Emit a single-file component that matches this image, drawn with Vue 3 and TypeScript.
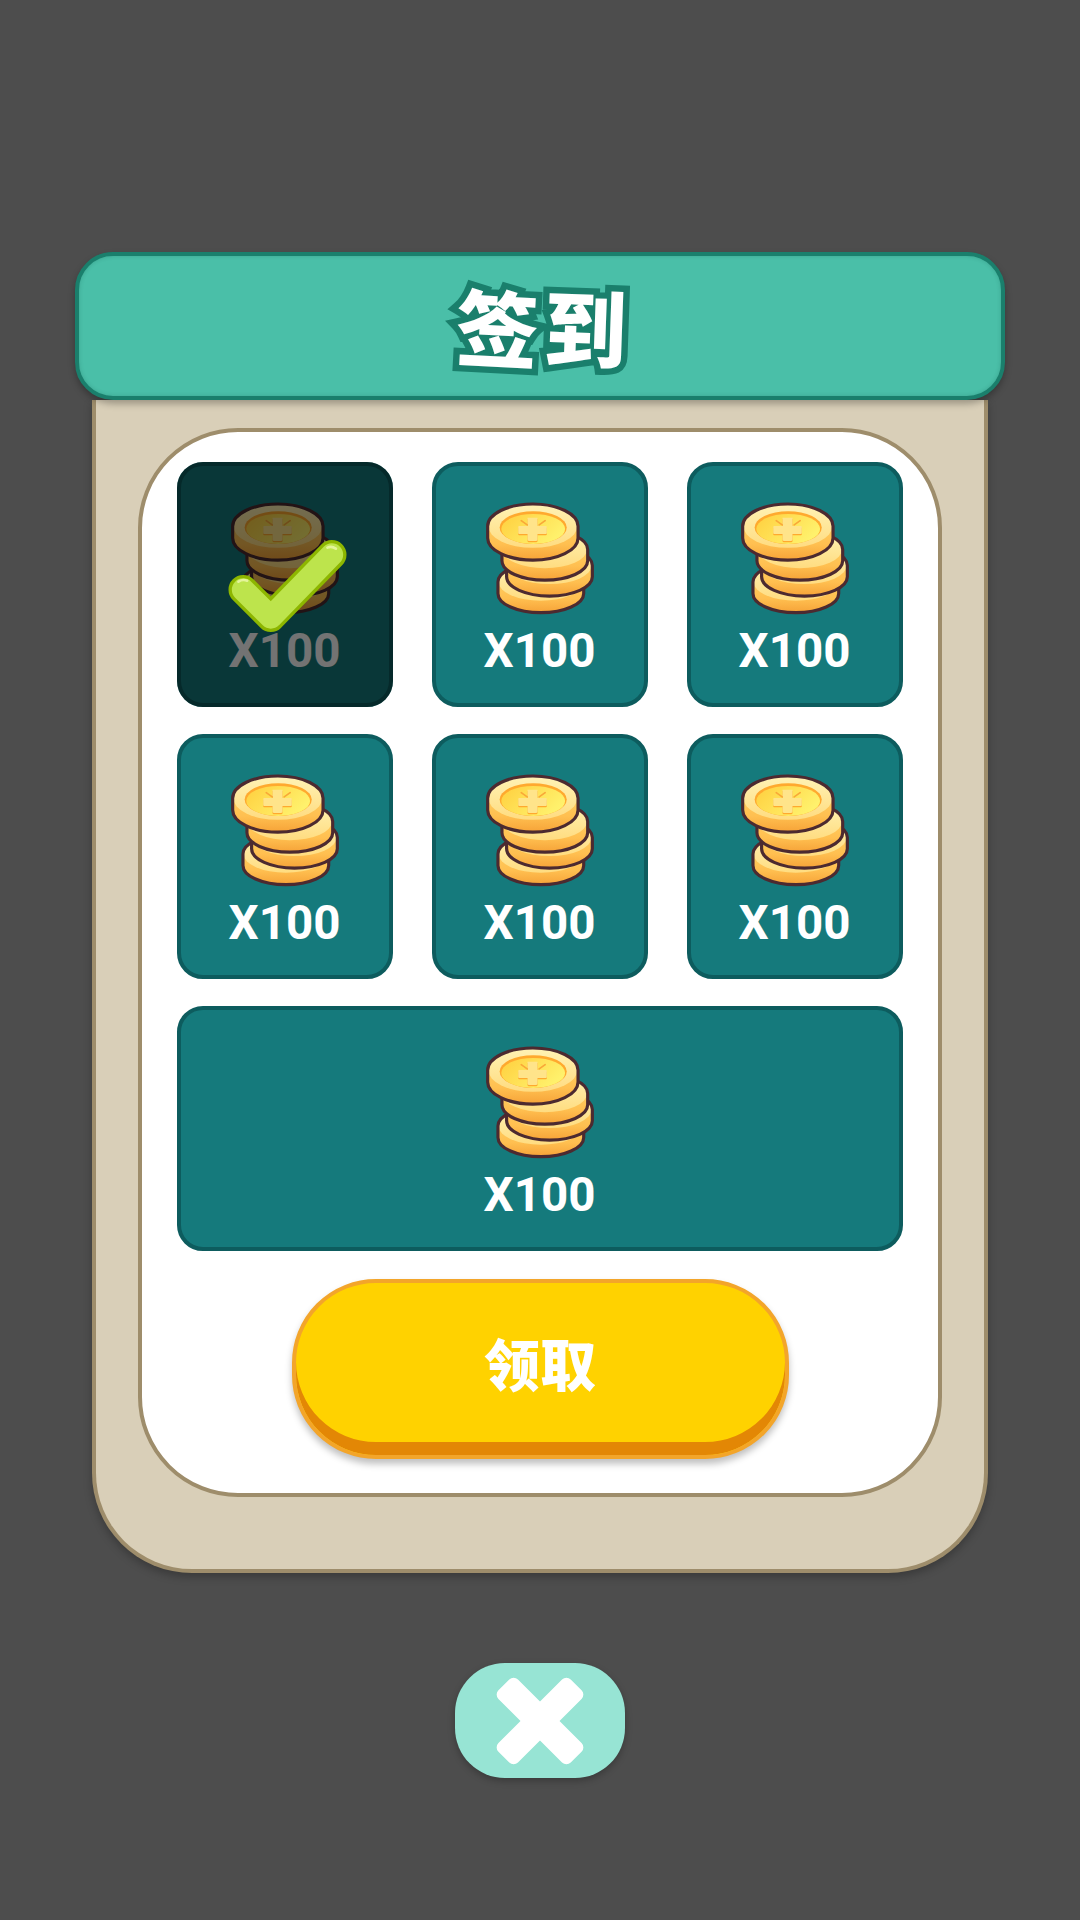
<script setup lang="ts">
interface Reward { id: number; wide?: boolean; done?: boolean }
const rewards: Reward[] = [
  { id: 1, done: true },
  { id: 2 },
  { id: 3 },
  { id: 4 },
  { id: 5 },
  { id: 6 },
  { id: 7, wide: true },
]
const lowerCoins = [
  { cx: 360, cy: 399 },
  { cx: 386, cy: 349 },
  { cx: 372, cy: 301 },
]
function side(cx: number, cy: number, rx: number, ry: number, h: number): string {
  return `M${cx - rx} ${cy}A${rx} ${ry} 0 0 1 ${cx + rx} ${cy}V${cy + h}A${rx} ${ry} 0 0 1 ${cx - rx} ${cy + h}Z`
}
</script>

<template>
  <div class="screen">
    <svg class="sprite" aria-hidden="true">
      <defs>
        <linearGradient id="coinSide" x1="0" y1="0" x2="0" y2="1">
          <stop offset="0.4" stop-color="#ffcc5e" />
          <stop offset="0.72" stop-color="#ffbf50" />
          <stop offset="1" stop-color="#f6a338" />
        </linearGradient>
        <linearGradient id="coinTop" x1="0" y1="0" x2="0" y2="1">
          <stop offset="0" stop-color="#fff2b4" />
          <stop offset="1" stop-color="#ffdc80" />
        </linearGradient>
        <linearGradient id="coinFace" x1="0" y1="0" x2="1" y2="0.5">
          <stop offset="0" stop-color="#ffcf3e" />
          <stop offset="1" stop-color="#fff16c" />
        </linearGradient>
        <symbol id="coins" viewBox="195 158 328 340">
          <g v-for="c in lowerCoins" :key="c.cx">
            <path :d="side(c.cx, c.cy, 129, 58, 34)" fill="url(#coinSide)" />
            <ellipse :cx="c.cx" :cy="c.cy" rx="127" ry="56" fill="url(#coinTop)" />
            <path :d="side(c.cx, c.cy, 129, 58, 34)" fill="none" stroke="#4c2a30" stroke-width="9.5" stroke-linejoin="round" />
          </g>
          <path :d="side(336, 231, 136, 67, 35)" fill="url(#coinSide)" />
          <ellipse cx="336" cy="231" rx="134" ry="65" fill="url(#coinTop)" />
          <path :d="side(336, 231, 136, 67, 35)" fill="none" stroke="#4c2a30" stroke-width="9.5" stroke-linejoin="round" />
          <ellipse cx="337" cy="235" rx="101" ry="49" fill="#ffa92e" />
          <ellipse cx="337" cy="239" rx="96" ry="45" fill="url(#coinFace)" />
          <path
            d="M320 207h30v25h25q3 0 3 3v18q0 3-3 3h-25v17q0 4-4 4h-22q-4 0-4-4v-17h-25q-3 0-3-3v-18q0-3 3-3h25Z"
            fill="#ffa92e"
            transform="translate(0 2)"
          />
          <path
            d="M320 205h30v25h25q3 0 3 3v18q0 3-3 3h-25v17q0 4-4 4h-22q-4 0-4-4v-17h-25q-3 0-3-3v-18q0-3 3-3h25Z"
            fill="#ffe48a"
          />
          <path d="M301 214l18 13M373 214l-18 13" stroke="#f9a838" stroke-width="5" fill="none" stroke-linecap="round" />
        </symbol>
      </defs>
    </svg>

    <div class="dialog">
      <header class="title-bar">
        <h1 class="title"><span class="title-a">签</span><span class="title-b">到</span></h1>
      </header>

      <section class="panel">
        <div class="sheet">
          <div class="grid">
            <div v-for="r in rewards" :key="r.id" class="card" :class="{ wide: r.wide }">
              <svg class="stack"><use href="#coins" /></svg>
              <span class="amount">X100</span>
              <div v-if="r.done" class="veil">
                <svg class="check" viewBox="160 220 440 360">
                  <polyline points="250,417 333,500 516,312" fill="none" stroke="#8db600" stroke-width="88" stroke-linecap="round" stroke-linejoin="round" />
                  <polyline points="250,417 333,500 516,312" fill="none" stroke="#bde44c" stroke-width="68" stroke-linecap="round" stroke-linejoin="round" />
                  <path d="M236 393q12-8 26-3M503 291q12-6 25 3" fill="none" stroke="#e4f49a" stroke-width="8" stroke-linecap="round" />
                </svg>
              </div>
            </div>
          </div>
          <button class="claim" type="button">领取</button>
        </div>
      </section>

      <button class="close" type="button" aria-label="关闭">
        <svg class="close-icon" viewBox="0 0 90 90">
          <rect x="-5" y="31.5" width="100" height="27" rx="6" transform="rotate(45 45 45)" fill="#fff" />
          <rect x="-5" y="31.5" width="100" height="27" rx="6" transform="rotate(-45 45 45)" fill="#fff" />
        </svg>
      </button>
    </div>
  </div>
</template>

<style scoped>
.screen {
  width: 1080px;
  height: 1920px;
  background: #4d4d4d;
  display: flex;
  flex-direction: column;
  align-items: center;
  padding-top: 252px;
  box-sizing: border-box;
  font-family: "Roboto", "Noto Sans CJK SC", sans-serif;
  overflow: hidden;
}
.sprite {
  position: absolute;
  width: 0;
  height: 0;
}
.dialog {
  display: flex;
  flex-direction: column;
  align-items: center;
}
.title-bar {
  position: relative;
  z-index: 1;
  box-sizing: border-box;
  width: 930px;
  height: 148px;
  background: #4abfa8;
  border: 4px solid #1a7f6c;
  border-radius: 38px;
  box-shadow: 0 4px 7px rgba(0, 0, 0, 0.28), inset 0 0 4px rgba(0, 60, 50, 0.2);
  display: flex;
  align-items: center;
  justify-content: center;
}
.title {
  margin: 0 0 2px 3px;
  display: flex;
  gap: 5px;
  font-family: "Noto Sans CJK SC", sans-serif;
  font-weight: 900;
  font-size: 83px;
  line-height: 100px;
  color: #fff;
  -webkit-text-stroke: 13px #1a7f6c;
  paint-order: stroke fill;
}
.title-a {
  transform: rotate(3deg);
}
.title-b {
  transform: rotate(2deg);
}
.panel {
  box-sizing: border-box;
  width: 896px;
  padding: 28px 42px 72px;
  background: #d9cfb8;
  border: 4px solid #9e8d6b;
  border-top: 0;
  border-radius: 0 0 100px 100px;
  box-shadow: 0 4px 8px rgba(0, 0, 0, 0.25);
}
.sheet {
  box-sizing: border-box;
  padding: 30px 35px 34px;
  background: #fff;
  border: 4px solid #9e8d6b;
  border-radius: 100px;
  display: flex;
  flex-direction: column;
  align-items: center;
}
.grid {
  display: grid;
  grid-template-columns: repeat(3, 216px);
  grid-auto-rows: 245px;
  column-gap: 39px;
  row-gap: 27px;
}
.card {
  position: relative;
  box-sizing: border-box;
  background: #157a7c;
  border: 4px solid #0d5c5e;
  border-radius: 26px;
  padding-top: 36px;
  display: flex;
  flex-direction: column;
  align-items: center;
}
.card.wide {
  grid-column: 1 / -1;
}
.stack {
  width: 109px;
  height: 113px;
  flex: none;
}
.amount {
  margin-top: 9px;
  margin-right: 1px;
  font-size: 47.5px;
  font-weight: 700;
  line-height: 54px;
  color: #fff;
}
.veil {
  position: absolute;
  inset: -4px;
  border-radius: 26px;
  background: rgba(0, 0, 0, 0.55);
}
.check {
  position: absolute;
  left: 0;
  top: 0;
  width: 147px;
  height: 120px;
  margin: 62px 0 0 36px;
}
.claim {
  margin-top: 28px;
  box-sizing: border-box;
  width: 497px;
  height: 180px;
  padding: 0 0 16px;
  border: 4px solid #f3a52a;
  border-radius: 84px;
  background: #ffd200;
  box-shadow: inset 0 -13px 0 #e38705, 0 5px 7px rgba(0, 0, 0, 0.25);
  font-family: "Noto Sans CJK SC", sans-serif;
  font-size: 56px;
  font-weight: 900;
  color: #fff;
}
.close {
  margin-top: 90px;
  box-sizing: border-box;
  width: 170px;
  height: 115px;
  padding: 0;
  border: 0;
  border-radius: 50px;
  background: #97e4d4;
  box-shadow: 0 3px 7px rgba(0, 0, 0, 0.25);
  display: flex;
  align-items: center;
  justify-content: center;
}
.close-icon {
  width: 92px;
  height: 92px;
}
</style>
